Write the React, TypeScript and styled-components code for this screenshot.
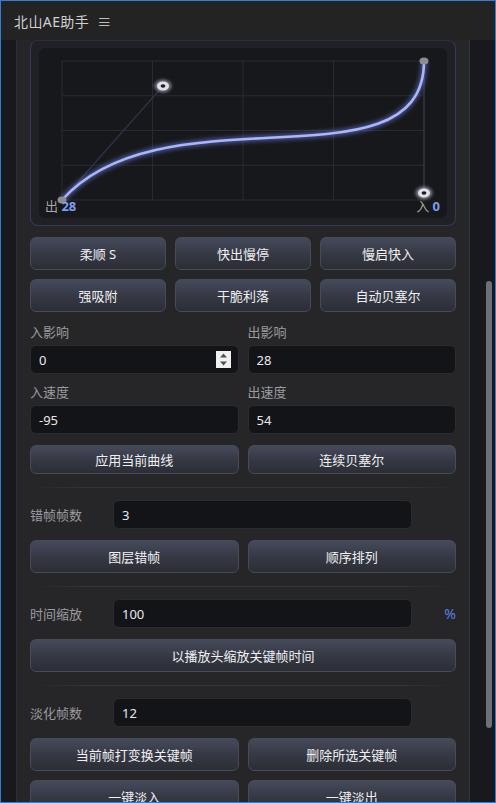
import React from "react";
import styled, { createGlobalStyle } from "styled-components";

const GlobalStyle = createGlobalStyle`
  html, body {
    margin: 0;
    padding: 0;
    background: #18191c;
  }
  body {
    font-family: "Noto Sans", "Noto Sans CJK SC", sans-serif;
  }
  * {
    box-sizing: border-box;
  }
`;

const presetRows = [
  ["柔顺 S", "快出慢停", "慢启快入"],
  ["强吸附", "干脆利落", "自动贝塞尔"],
];

// graph coordinates, local to the 408x170 canvas
const P0 = { x: 23, y: 152 };
const P1 = { x: 124, y: 38 };
const P2 = { x: 385, y: 145 };
const P3 = { x: 385, y: 13 };

const CurveGraph: React.FC = () => {
  const cols = [23, 113.5, 204, 294.5, 385];
  const rows = [13, 47.75, 82.5, 117.25, 152];
  return (
    <Graph>
      <svg width="408" height="170" viewBox="0 0 408 170">
        <defs>
          <filter id="glow" x="-20%" y="-20%" width="140%" height="140%">
            <feGaussianBlur stdDeviation="2" />
          </filter>
          <filter id="handleGlow" x="-50%" y="-50%" width="200%" height="200%">
            <feGaussianBlur stdDeviation="1.6" />
          </filter>
        </defs>
        {cols.map((x) => (
          <line key={"v" + x} x1={x} y1={13} x2={x} y2={152} stroke="#2a2b31" strokeWidth="1" />
        ))}
        {rows.map((y) => (
          <line key={"h" + y} x1={23} y1={y} x2={385} y2={y} stroke="#2a2b31" strokeWidth="1" />
        ))}
        <line x1={P0.x} y1={P0.y} x2={P1.x} y2={P1.y} stroke="#2f3349" strokeWidth="1.2" />
        <line x1={P3.x} y1={P3.y} x2={P2.x} y2={P2.y} stroke="#30333f" strokeWidth="1.5" />
        <path
          d={`M${P0.x} ${P0.y} C${P1.x} ${P1.y} ${P2.x} ${P2.y} ${P3.x} ${P3.y}`}
          fill="none"
          stroke="#6f82e6"
          strokeWidth="6"
          opacity="0.55"
          filter="url(#glow)"
        />
        <path
          d={`M${P0.x} ${P0.y} C${P1.x} ${P1.y} ${P2.x} ${P2.y} ${P3.x} ${P3.y}`}
          fill="none"
          stroke="#a9b6fb"
          strokeWidth="2.6"
          strokeLinecap="round"
        />
        <ellipse cx={P0.x} cy={P0.y} rx="4.5" ry="3.6" fill="#8c8d92" />
        <ellipse cx={P3.x} cy={P3.y} rx="4.5" ry="3.6" fill="#8c8d92" />
        {[P1, P2].map((p, i) => (
          <g key={i}>
            <ellipse cx={p.x} cy={p.y} rx="8.5" ry="6.5" fill="#c9cdda" opacity="0.55" filter="url(#handleGlow)" />
            <ellipse cx={p.x} cy={p.y} rx="6" ry="4.6" fill="#dfe1e8" />
            <ellipse cx={p.x} cy={p.y} rx="2.4" ry="1.8" fill="#1c1d22" />
          </g>
        ))}
      </svg>
      <GraphLabel $side="left">
        出 <b>28</b>
      </GraphLabel>
      <GraphLabel $side="right">
        入 <b>0</b>
      </GraphLabel>
    </Graph>
  );
};

const Spinner: React.FC = () => (
  <SpinBox>
    <svg width="15" height="17" viewBox="0 0 15 17">
      <path d="M7.5 2.5 L11 6.5 L4 6.5 Z" fill="#505257" />
      <path d="M7.5 14.5 L11 10.5 L4 10.5 Z" fill="#505257" />
    </svg>
  </SpinBox>
);

interface FieldProps {
  label: string;
  value: string;
  spinner?: boolean;
}

const Field: React.FC<FieldProps> = ({ label, value, spinner }) => (
  <FieldCol>
    <FieldLabel>{label}</FieldLabel>
    <InputBox>
      <BareInput readOnly value={value} />
      {spinner && <Spinner />}
    </InputBox>
  </FieldCol>
);

interface InlineFieldProps {
  label: string;
  value: string;
  suffix?: string;
}

const InlineField: React.FC<InlineFieldProps> = ({ label, value, suffix }) => (
  <InlineRow>
    <InlineLabel>{label}</InlineLabel>
    <InputBox>
      <BareInput readOnly value={value} />
    </InputBox>
    <Suffix>{suffix}</Suffix>
  </InlineRow>
);

export default function App() {
  return (
    <>
      <GlobalStyle />
      <Frame>
        <TitleBar>
          <TitleText>北山AE助手</TitleText>
          <MenuGlyph>≡</MenuGlyph>
        </TitleBar>
        <Body>
          <Panel>
            <CurveCard>
              <CurveGraph />
            </CurveCard>

            <ButtonGrid $cols={3} $mt={11}>
              {presetRows.flat().map((t) => (
                <ActionButton key={t}>{t}</ActionButton>
              ))}
            </ButtonGrid>

            <FieldGrid>
              <Field label="入影响" value="0" spinner />
              <Field label="出影响" value="28" />
              <Field label="入速度" value="-95" />
              <Field label="出速度" value="54" />
            </FieldGrid>

            <ButtonGrid $cols={2} $mt={11}>
              <ActionButton $h={29}>应用当前曲线</ActionButton>
              <ActionButton $h={29}>连续贝塞尔</ActionButton>
            </ButtonGrid>

            <Divider />
            <InlineField label="错帧帧数" value="3" />
            <ButtonGrid $cols={2} $mt={11}>
              <ActionButton>图层错帧</ActionButton>
              <ActionButton>顺序排列</ActionButton>
            </ButtonGrid>

            <Divider />
            <InlineField label="时间缩放" value="100" suffix="%" />
            <ButtonGrid $cols={1} $mt={11}>
              <ActionButton>以播放头缩放关键帧时间</ActionButton>
            </ButtonGrid>

            <Divider />
            <InlineField label="淡化帧数" value="12" />
            <ButtonGrid $cols={2} $mt={11}>
              <ActionButton>当前帧打变换关键帧</ActionButton>
              <ActionButton>删除所选关键帧</ActionButton>
              <ActionButton>一键淡入</ActionButton>
              <ActionButton>一键淡出</ActionButton>
            </ButtonGrid>
          </Panel>
          <ScrollTrack>
            <ScrollThumb />
          </ScrollTrack>
        </Body>
      </Frame>
    </>
  );
}

const Frame = styled.div`
  width: 496px;
  height: 803px;
  border: 1px solid #2f7ed8;
  background: #18191c;
  display: flex;
  flex-direction: column;
  overflow: hidden;
`;

const TitleBar = styled.div`
  height: 39px;
  flex: none;
  background: #232323;
  display: flex;
  align-items: center;
  gap: 8px;
  padding-left: 13px;
  color: #cfcfcf;
  font-size: 14px;
`;

const TitleText = styled.span`
  letter-spacing: 0.4px;
`;

const MenuGlyph = styled.span`
  font-size: 14px;
  color: #bdbdbd;
`;

const Body = styled.div`
  flex: 1;
  min-height: 0;
  display: flex;
  padding-left: 15px;
  overflow: hidden;
`;

const Panel = styled.div`
  width: 454px;
  flex: none;
  background: #262629;
  border-left: 1px solid #2f2f34;
  border-right: 1px solid #34343a;
  padding: 0 13px;
  display: flex;
  flex-direction: column;
`;

const ScrollTrack = styled.div`
  margin-left: 16px;
  width: 6px;
  flex: none;
`;

const ScrollThumb = styled.div`
  margin-top: 241px;
  height: 447px;
  width: 6px;
  border-radius: 3px;
  background: #6c7079;
`;

const CurveCard = styled.div`
  flex: none;
  height: 186px;
  border: 1px solid #373a50;
  border-top-color: #2c2e3c;
  border-radius: 8px;
  background: #202127;
  padding: 7px 8px;
`;

const Graph = styled.div`
  position: relative;
  width: 408px;
  height: 170px;
  border-radius: 6px;
  background: #17181c;

  svg {
    display: block;
  }
`;

const GraphLabel = styled.span<{ $side: "left" | "right" }>`
  position: absolute;
  bottom: 4px;
  ${(p) => (p.$side === "left" ? "left: 6px;" : "right: 7px;")}
  font-size: 13px;
  line-height: 16px;
  color: #a6a6a6;

  b {
    color: #7f9cf2;
    font-weight: 700;
  }
`;

const ButtonGrid = styled.div<{ $cols: number; $mt: number }>`
  display: grid;
  grid-template-columns: repeat(${(p) => p.$cols}, minmax(0, 1fr));
  gap: 9px;
  margin-top: ${(p) => p.$mt}px;
`;

const ActionButton = styled.button<{ $h?: number }>`
  height: ${(p) => p.$h ?? 33}px;
  border: 1px solid #474a57;
  border-radius: 6px;
  background: linear-gradient(180deg, #454a5b 0%, #363945 50%, #2c2e35 100%);
  color: #f0f0f2;
  font-family: "Noto Sans", "Noto Sans CJK SC", sans-serif;
  font-size: 13px;
  padding: 0 6px;
  cursor: pointer;
  white-space: nowrap;
`;

const FieldGrid = styled.div`
  display: grid;
  grid-template-columns: minmax(0, 1fr) minmax(0, 1fr);
  column-gap: 9px;
  row-gap: 9px;
  margin-top: 11px;
`;

const FieldCol = styled.div`
  display: flex;
  flex-direction: column;
  gap: 4px;
  min-width: 0;
`;

const FieldLabel = styled.label`
  font-size: 13px;
  line-height: 18px;
  color: #9b9b9f;
`;

const InputBox = styled.div`
  height: 29px;
  display: flex;
  align-items: center;
  background: #131418;
  border: 1px solid #2b2c32;
  border-radius: 6px;
  padding: 0 7px 0 8px;
  min-width: 0;
`;

const BareInput = styled.input`
  flex: 1;
  width: 0;
  min-width: 0;
  background: transparent;
  border: none;
  outline: none;
  color: #e8e8ea;
  font-family: "Noto Sans", "Noto Sans CJK SC", sans-serif;
  font-size: 13px;
  padding: 0;
`;

const SpinBox = styled.div`
  width: 15px;
  height: 17px;
  background: #f0f0f0;
  flex: none;

  svg {
    display: block;
  }
`;

const Divider = styled.div`
  height: 1px;
  flex: none;
  margin: 13px 0 12px;
  background: linear-gradient(
    90deg,
    rgba(60, 60, 66, 0) 0%,
    #333338 12%,
    #333338 88%,
    rgba(60, 60, 66, 0) 100%
  );
`;

const InlineRow = styled.div`
  display: grid;
  grid-template-columns: 83px minmax(0, 1fr) 44px;
  align-items: center;
`;

const InlineLabel = styled.span`
  font-size: 13px;
  color: #9b9b9f;
`;

const Suffix = styled.span`
  text-align: right;
  font-size: 14px;
  color: #5b80e8;
`;
